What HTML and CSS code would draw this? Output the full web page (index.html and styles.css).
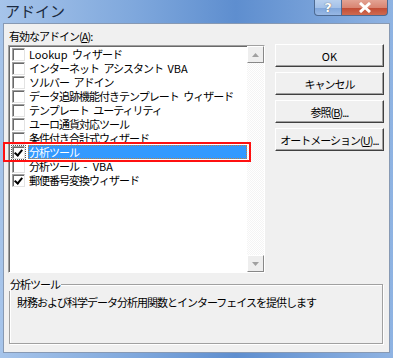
FILE: index.html
```html
<!DOCTYPE html>
<html lang="ja">
<head>
    <meta charset="UTF-8">
    <title>アドイン</title>
    <link rel="stylesheet" href="styles.css">
</head>
<body>
    <div class="window">
        <div class="titlebar">
            <span class="title">アドイン</span>
            <div class="caption-buttons">
                <span class="cap-btn help">?</span>
                <span class="cap-btn close">
                    <svg width="14" height="11" viewBox="0 0 14 11"><path d="M2 1 L12 10 M12 1 L2 10" stroke="#fff" stroke-width="3"/></svg>
                </span>
            </div>
        </div>
        <div class="client">
            <div class="main">
                <div class="left">
                    <div class="label">有効なアドイン(<u>A</u>):</div>
                    <div class="listbox">
                        <ul class="items">
                            <li><span class="check"></span><span class="text"><span class="en">Lookup</span> ウィザード</span></li>
                            <li><span class="check"></span><span class="text">インターネット アシスタント <span class="en">VBA</span></span></li>
                            <li><span class="check"></span><span class="text">ソルバー アドイン</span></li>
                            <li><span class="check"></span><span class="text">データ追跡機能付きテンプレート ウィザード</span></li>
                            <li><span class="check"></span><span class="text">テンプレート ユーティリティ</span></li>
                            <li><span class="check"></span><span class="text">ユーロ通貨対応ツール</span></li>
                            <li><span class="check"></span><span class="text">条件付き合計式ウィザード</span></li>
                            <li class="selected"><span class="check checked focus"></span><span class="text">分析ツール</span></li>
                            <li><span class="check"></span><span class="text">分析ツール <span class="en">- VBA</span></span></li>
                            <li><span class="check checked"></span><span class="text">郵便番号変換ウィザード</span></li>
                        </ul>
                        <div class="scrollbar">
                            <div class="arrow"><svg width="7" height="4" viewBox="0 0 7 4"><path d="M0 4 L3.5 0 L7 4 Z" fill="#a0a0a0"/></svg></div>
                            <div class="track"></div>
                            <div class="arrow"><svg width="7" height="4" viewBox="0 0 7 4"><path d="M0 0 L3.5 4 L7 0 Z" fill="#a0a0a0"/></svg></div>
                        </div>
                        <div class="highlight-box"></div>
                    </div>
                </div>
                <div class="buttons">
                    <button class="btn"><span class="en">OK</span></button>
                    <button class="btn">キャンセル</button>
                    <button class="btn">参照(<u>B</u>)...</button>
                    <button class="btn">オートメーション(<u>U</u>)...</button>
                </div>
            </div>
            <fieldset class="group">
                <legend>分析ツール</legend>
                <p>財務および科学データ分析用関数とインターフェイスを提供します</p>
            </fieldset>
        </div>
    </div>
</body>
</html>
```
FILE: styles.css
```css
body {
    margin: 0;
    font-family: "Noto Sans CJK JP", sans-serif;
    font-size: 11px;
    letter-spacing: -1px;
    word-spacing: 3px;
    color: #000;
}
.en {
    letter-spacing: 0;
}
.window {
    width: 393px;
    height: 358px;
    box-sizing: border-box;
    padding: 0 3px 5px 3px;
    background: linear-gradient(90deg, #a6c4ea 0%, #7ea7dc 35%, #5e8ecf 60%, #8fb3e2 100%);
    display: flex;
    flex-direction: column;
}
.titlebar {
    height: 23px;
    display: flex;
    justify-content: space-between;
    align-items: flex-start;
}
.title {
    margin: 3px 0 0 2px;
    font-size: 15px;
    letter-spacing: 0;
    line-height: 16px;
    color: #1b2a40;
}
.caption-buttons {
    display: flex;
    margin-right: 2px;
}
.cap-btn {
    height: 15px;
    display: flex;
    align-items: center;
    justify-content: center;
    border: 1px solid #4d6a92;
    border-top: none;
}
.help {
    width: 26px;
    border-radius: 0 0 0 4px;
    background: linear-gradient(#b8d0ee 0%, #a4c1e8 50%, #7fa5da 51%, #98b8e4 100%);
    color: #fff;
    font-family: "DejaVu Sans", sans-serif;
    font-weight: bold;
    font-size: 13px;
    letter-spacing: 0;
    text-shadow: 0 0 1px #333;
}
.close {
    width: 45px;
    border-left: none;
    border-radius: 0 0 4px 0;
    background: linear-gradient(#e3a394 0%, #d98572 50%, #c14a33 51%, #cf6a50 100%);
}
.client {
    flex: 1;
    background: #f0f0f0;
    border: 1px solid #8799b3;
    padding: 5px 5px 0 4px;
}
.main {
    display: flex;
    gap: 10px;
}
.left {
    flex: none;
}
.label {
    line-height: 15px;
    margin-left: 1px;
    margin-bottom: 1px;
}
.listbox {
    position: relative;
    width: 257px;
    height: 228px;
    box-sizing: border-box;
    border: 1px solid;
    border-color: #a0a0a0 #fff #fff #a0a0a0;
    box-shadow: inset 1px 1px 0 #696969;
    background: #fff;
    display: flex;
}
.items {
    list-style: none;
    margin: 0;
    padding: 1px 0 0 3px;
    flex: 1;
    min-width: 0;
    overflow: hidden;
}
.items li {
    height: 14px;
    display: flex;
    align-items: center;
}
.check {
    flex: none;
    width: 11px;
    height: 11px;
    border: 1px solid;
    border-color: #a0a0a0 #e3e3e3 #e3e3e3 #a0a0a0;
    box-shadow: inset 1px 1px 0 #696969;
    background: #fff;
    margin-right: 3px;
    position: relative;
}
.check.checked::after {
    content: "";
    position: absolute;
    left: 3px;
    top: 1px;
    width: 3px;
    height: 6px;
    border: solid #000;
    border-width: 0 2px 2px 0;
    transform: rotate(40deg);
}
.check.focus {
    outline: 1px dotted #555;
}
.text {
    line-height: 14px;
    padding: 0 2px 0 1px;
    white-space: nowrap;
}
.selected .text {
    flex: 1;
    background: #3399ff;
    color: #fff;
    outline: 1px dotted #c08040;
    outline-offset: -1px;
}
.scrollbar {
    flex: none;
    width: 17px;
    display: flex;
    flex-direction: column;
    background: repeating-conic-gradient(#f4f4f4 0 25%, #fff 0 50%) 0 0 / 2px 2px;
}
.arrow {
    height: 17px;
    box-sizing: border-box;
    border: 1px solid;
    border-color: #fff #888 #888 #fff;
    background: #eee;
    display: flex;
    align-items: center;
    justify-content: center;
}
.track {
    flex: 1;
}
.highlight-box {
    position: absolute;
    left: -6px;
    top: 96px;
    width: 248px;
    height: 20px;
    box-sizing: border-box;
    border: 2px solid #ff1010;
}
.buttons {
    display: flex;
    flex-direction: column;
    gap: 5px;
    margin-top: 15px;
}
.btn {
    width: 109px;
    height: 23px;
    font-family: inherit;
    font-size: 11px;
    letter-spacing: -1px;
    background: #f0f0f0;
    border: 1px solid;
    border-color: #fff #404040 #404040 #fff;
    box-shadow: inset -1px -1px 0 #a0a0a0;
    padding: 0;
    color: #000;
}
.group {
    margin: 4px 1px 0 1px;
    height: 67px;
    box-sizing: border-box;
    border: 1px solid #a0a0a0;
    box-shadow: 1px 1px 0 #fff, inset 1px 1px 0 #fff;
    padding: 0 7px;
}
.group legend {
    padding: 0 1px;
    margin-left: -8px;
    line-height: 14px;
}
.group p {
    margin: 4px 0 0 0;
    line-height: 14px;
}
```
